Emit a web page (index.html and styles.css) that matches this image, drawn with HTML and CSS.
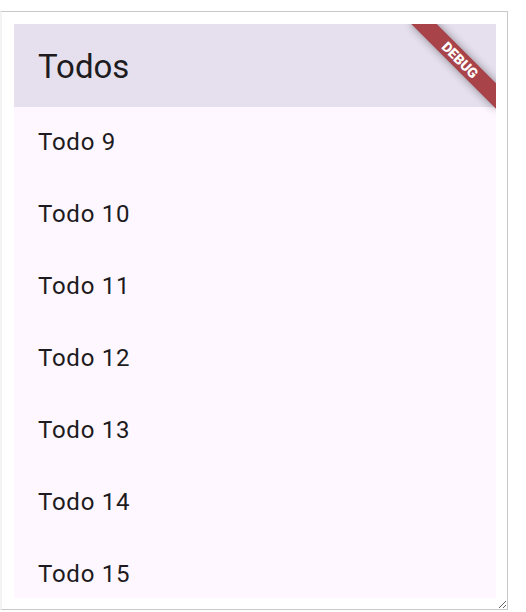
FILE: index.html
```html
<!DOCTYPE html>
<html>
<head>
<meta charset="utf-8">
<link rel="stylesheet" href="styles.css">
</head>
<body>
<div class="frame">
  <div class="app">
    <header class="appbar"><h1 class="title">Todos</h1></header>
    <ul class="list">
      <li class="item">Todo 9</li>
      <li class="item">Todo 10</li>
      <li class="item">Todo 11</li>
      <li class="item">Todo 12</li>
      <li class="item">Todo 13</li>
      <li class="item">Todo 14</li>
      <li class="item">Todo 15</li>
    </ul>
    <div class="banner"><span class="banner-text">DEBUG</span></div>
  </div>
</div>
</body>
</html>
```
FILE: styles.css
```css
html, body {
  margin: 0;
  padding: 0;
  background: #ffffff;
}
.frame {
  margin-top: 11px;
  width: 482px;
  height: 574px;
  padding: 12px 11px 11px 12px;
  border-top: 1px solid #c9c9c9;
  border-right: 1px solid #c9c9c9;
  border-bottom: 1px solid #c9c9c9;
  border-left: 2px solid #f3f3f3;
  resize: both;
  overflow: hidden;
}
.app {
  position: relative;
  width: 482px;
  height: 574px;
  overflow: hidden;
  background: #fef7ff;
  display: flex;
  flex-direction: column;
  font-family: Roboto, "Noto Sans", sans-serif;
  color: #1d1b20;
}
.appbar {
  flex: 0 0 83px;
  background: #e6e0ee;
  display: flex;
  align-items: center;
  padding-left: 24px;
}
.title {
  margin: 0;
  font-size: 33px;
  font-weight: 400;
  line-height: 1;
  padding-top: 2px;
}
.list {
  list-style: none;
  margin: -1px 0 0 0;
  padding: 0;
}
.item {
  height: 72px;
  display: flex;
  align-items: center;
  padding-left: 24px;
  font-size: 24px;
  letter-spacing: 0.75px;
}
.banner {
  position: absolute;
  width: 120px;
  height: 18px;
  left: 385.9px;
  top: 27.1px;
  transform: rotate(45deg);
  background: #a8434a;
  box-shadow: 0 0 10px rgba(0, 0, 0, 0.4);
  display: flex;
  align-items: center;
  justify-content: center;
}
.banner-text {
  color: #ffffff;
  font-family: Roboto, "Noto Sans", sans-serif;
  font-weight: 900;
  font-size: 14px;
  line-height: 1;
}
```
